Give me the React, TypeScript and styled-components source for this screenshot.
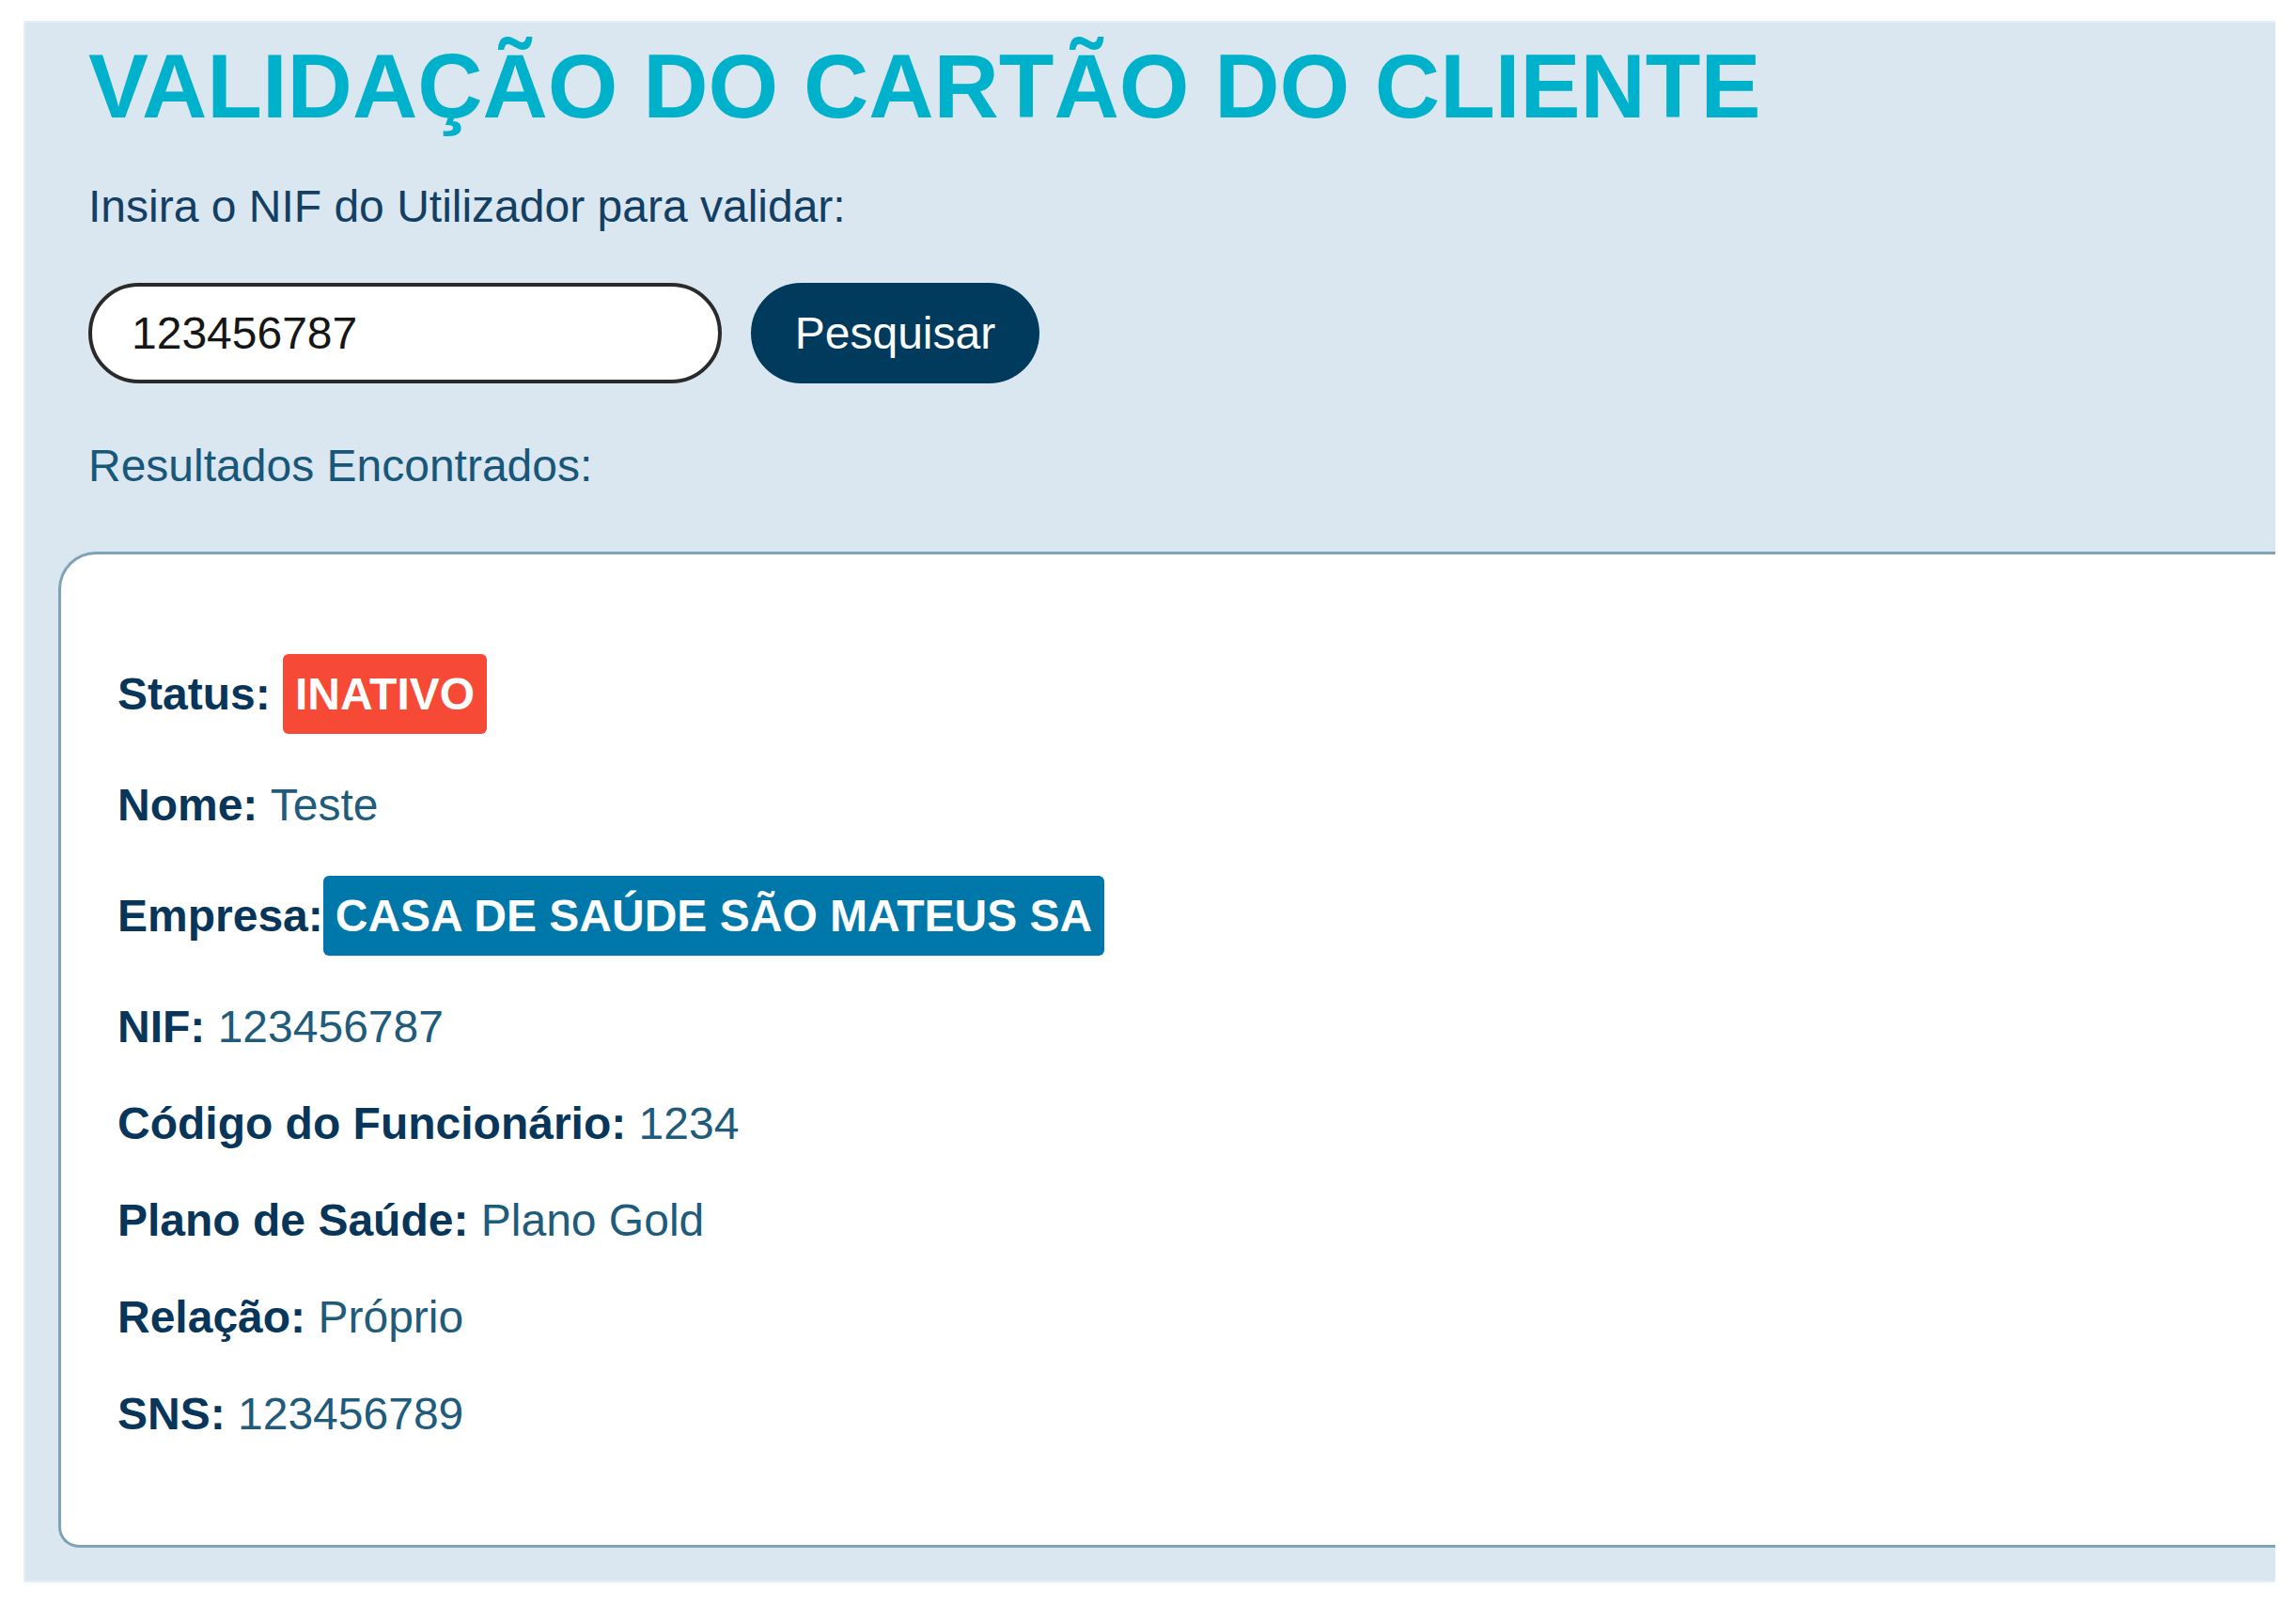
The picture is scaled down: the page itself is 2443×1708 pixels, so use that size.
import React from "react";
import styled, { createGlobalStyle } from "styled-components";

const GlobalStyle = createGlobalStyle`
  html, body {
    margin: 0;
    padding: 0;
    background: #ffffff;
    font-family: "Liberation Sans", Arial, sans-serif;
  }
  * { box-sizing: border-box; }
`;

const Panel = styled.section`
  margin: 22px 22px 0 25px;
  width: 2396px;
  background: #dae6f0;
  border-top: 2px solid #e5eff7;
  border-bottom: 2px solid #e5eff7;
  border-left: 2px solid #e5eff7;
  padding: 20px 0 35px 35px;
  overflow: hidden;
  display: flex;
  flex-direction: column;
`;

const Header = styled.div`
  padding-left: 32px;
  display: flex;
  flex-direction: column;
  align-items: flex-start;
`;

const Title = styled.h1`
  margin: 0;
  font-size: 96px;
  line-height: 96px;
  font-weight: 700;
  color: #00b1cb;
  white-space: nowrap;
`;

const Prompt = styled.p<{ $tone: "dark" | "teal"; $top: number }>`
  margin: ${(p) => p.$top}px 0 0 0;
  font-size: 48px;
  line-height: 56px;
  color: ${(p) => (p.$tone === "dark" ? "#123f63" : "#17577a")};
`;

const SearchRow = styled.div`
  margin-top: 53px;
  display: flex;
  align-items: center;
  gap: 31px;
`;

const NifInput = styled.input`
  width: 674px;
  height: 107px;
  border: 4px solid #2a2a2a;
  border-radius: 54px;
  background: #ffffff;
  padding: 0 0 0 42px;
  font-family: "Liberation Sans", Arial, sans-serif;
  font-size: 48px;
  color: #161616;
  outline: none;
`;

const SearchButton = styled.button`
  width: 307px;
  height: 107px;
  border: none;
  border-radius: 54px;
  background: #003a5d;
  color: #ffffff;
  font-family: "Liberation Sans", Arial, sans-serif;
  font-size: 48px;
  cursor: pointer;
`;

const ResultCard = styled.div`
  margin-top: 63px;
  background: #ffffff;
  border: 3px solid #7ea3b7;
  border-right: none;
  border-radius: 40px 0 0 22px;
  padding: 106px 0 112px 60px;
  display: flex;
  flex-direction: column;
  gap: 48px;
`;

const Row = styled.div`
  display: flex;
  align-items: center;
  font-size: 48px;
  line-height: 55px;
  white-space: pre;
`;

const Label = styled.span`
  font-weight: 700;
  color: #08365a;
`;

const Value = styled.span`
  color: #1f5b7b;
`;

const Badge = styled.span<{ $bg: string }>`
  display: inline-flex;
  align-items: center;
  height: 85px;
  padding: 0 13px;
  border-radius: 6px;
  background: ${(p) => p.$bg};
  color: #ffffff;
  font-weight: 700;
`;

const fields: { label: string; value: string }[] = [
  { label: "NIF:", value: "123456787" },
  { label: "Código do Funcionário:", value: "1234" },
  { label: "Plano de Saúde:", value: "Plano Gold" },
  { label: "Relação:", value: "Próprio" },
  { label: "SNS:", value: "123456789" },
];

export default function App() {
  return (
    <>
      <GlobalStyle />
      <Panel>
        <Header>
          <Title>VALIDAÇÃO DO CARTÃO DO CLIENTE</Title>
          <Prompt $tone="dark" $top={52}>
            Insira o NIF do Utilizador para validar:
          </Prompt>
          <SearchRow>
            <NifInput defaultValue="123456787" />
            <SearchButton>Pesquisar</SearchButton>
          </SearchRow>
          <Prompt $tone="teal" $top={60}>
            Resultados Encontrados:
          </Prompt>
        </Header>
        <ResultCard>
          <Row>
            <Label>Status: </Label>
            <Badge $bg="#f74a36">INATIVO</Badge>
          </Row>
          <Row>
            <Label>Nome: </Label>
            <Value>Teste</Value>
          </Row>
          <Row>
            <Label>Empresa:</Label>
            <Badge $bg="#0077a9">CASA DE SAÚDE SÃO MATEUS SA</Badge>
          </Row>
          {fields.map((f) => (
            <Row key={f.label}>
              <Label>{f.label} </Label>
              <Value>{f.value}</Value>
            </Row>
          ))}
        </ResultCard>
      </Panel>
    </>
  );
}
